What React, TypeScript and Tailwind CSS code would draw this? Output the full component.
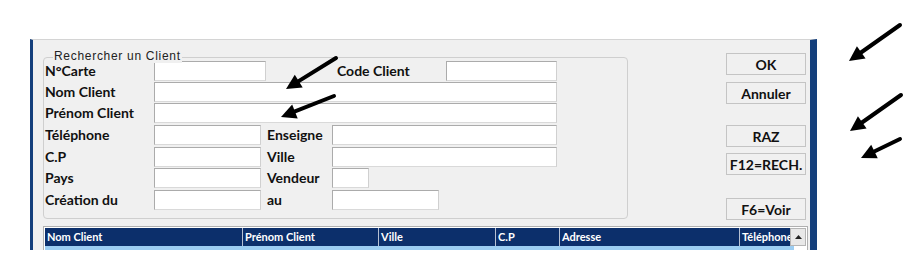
import React from "react";

type Pt = { x1: number; y1: number; x2: number; y2: number };

function Arrow({ x1, y1, x2, y2 }: Pt) {
  const dx = x2 - x1;
  const dy = y2 - y1;
  const L = Math.sqrt(dx * dx + dy * dy);
  const ux = dx / L;
  const uy = dy / L;
  const len = 15;
  const w = 7.5;
  const bx = x2 - ux * len;
  const by = y2 - uy * len;
  const px = -uy;
  const py = ux;
  const pts = `${x2},${y2} ${bx + px * w},${by + py * w} ${bx - px * w},${by - py * w}`;
  return (
    <g>
      <line x1={x1} y1={y1} x2={bx + ux * 2} y2={by + uy * 2} stroke="#000" strokeWidth={4} strokeLinecap="round" />
      <polygon points={pts} fill="#000" />
    </g>
  );
}

const labelFont = { fontFamily: "Lato, 'Open Sans', sans-serif" };

function Field({ w }: { w: number }) {
  return (
    <div
      className="h-[20px] bg-white border border-[#ababab] border-b-[#d9d9d9] border-r-[#d0d0d0] shrink-0"
      style={{ width: w }}
    />
  );
}

function Label({ children, w }: { children: React.ReactNode; w: string }) {
  return (
    <div className={`${w} shrink-0 text-[14px] font-bold text-[#111] leading-none whitespace-nowrap`} style={labelFont}>
      {children}
    </div>
  );
}

function Btn({ children, cls }: { children: React.ReactNode; cls: string }) {
  return (
    <div
      className={`w-[80px] h-[22px] border border-[#c4c4c4] bg-[#f0f0f0] flex items-center justify-center text-[14px] font-bold text-[#111] ${cls}`}
      style={labelFont}
    >
      {children}
    </div>
  );
}

const cols: { t: string; w: string }[] = [
  { t: "Nom Client", w: "w-[197px]" },
  { t: "Prénom Client", w: "w-[136px]" },
  { t: "Ville", w: "w-[117px]" },
  { t: "C.P", w: "w-[64px]" },
  { t: "Adresse", w: "w-[180px]" },
  { t: "Téléphone", w: "w-[51px]" },
];

export default function App() {
  return (
    <div className="relative w-[907px] h-[258px] bg-white overflow-hidden pt-[39px] pl-[30px]">
      <div className="w-[787px] h-[211px] bg-[#f0f0f0] border-l-[3px] border-r-[7px] border-l-[#143f7c] border-r-[#143f7c] border-t border-t-[#d4d4d4] flex flex-col">
        <div className="h-[180px] flex items-start">
          {/* group box */}
          <div className="relative mt-[17px] ml-[10px] w-[585px] h-[162px] border border-[#cfcfcf] rounded-[4px] pl-[1px] pt-[3px]">
            <div
              className="absolute -top-[9px] left-[9px] bg-[#f0f0f0] px-px text-[12px] leading-[14px] text-[#222] tracking-[0.7px]"
              style={{ fontFamily: "'Liberation Sans', Arial, sans-serif" }}
            >
              Rechercher un Client
            </div>
            <div className="flex flex-col">
              <div className="h-[21px] flex items-start">
                <div className="h-[20px] flex items-center"><Label w="w-[109px]">N°Carte</Label></div>
                <Field w={112} />
                <div className="h-[20px] flex items-center ml-[71px]"><Label w="w-[109px]">Code Client</Label></div>
                <Field w={111} />
              </div>
              <div className="h-[21px] flex items-start">
                <div className="h-[20px] flex items-center"><Label w="w-[109px]">Nom Client</Label></div>
                <Field w={403} />
              </div>
              <div className="h-[22px] flex items-start">
                <div className="h-[20px] flex items-center"><Label w="w-[109px]">Prénom Client</Label></div>
                <Field w={403} />
              </div>
              <div className="h-[22px] flex items-start">
                <div className="h-[20px] flex items-center"><Label w="w-[109px]">Téléphone</Label></div>
                <Field w={107} />
                <div className="h-[20px] flex items-center ml-[6px]"><Label w="w-[65px]">Enseigne</Label></div>
                <Field w={225} />
              </div>
              <div className="h-[21px] flex items-start">
                <div className="h-[20px] flex items-center"><Label w="w-[109px]">C.P</Label></div>
                <Field w={107} />
                <div className="h-[20px] flex items-center ml-[6px]"><Label w="w-[65px]">Ville</Label></div>
                <Field w={225} />
              </div>
              <div className="h-[22px] flex items-start">
                <div className="h-[20px] flex items-center"><Label w="w-[109px]">Pays</Label></div>
                <Field w={107} />
                <div className="h-[20px] flex items-center ml-[6px]"><Label w="w-[65px]">Vendeur</Label></div>
                <Field w={37} />
              </div>
              <div className="h-[21px] flex items-start">
                <div className="h-[20px] flex items-center"><Label w="w-[109px]">Création du</Label></div>
                <Field w={107} />
                <div className="h-[20px] flex items-center ml-[6px]"><Label w="w-[65px]">au</Label></div>
                <Field w={107} />
              </div>
            </div>
          </div>
          {/* buttons */}
          <div className="ml-[98px] mt-[13px] flex flex-col">
            <Btn cls="">OK</Btn>
            <Btn cls="mt-[7px]">Annuler</Btn>
            <Btn cls="mt-[21px]">RAZ</Btn>
            <Btn cls="mt-[6px]">F12=RECH.</Btn>
            <Btn cls="mt-[23px]">F6=Voir</Btn>
          </div>
        </div>
        {/* table */}
        <div className="mt-[6px] ml-[10px] w-[765px] flex-1 border border-[#b0b0b0] border-b-0 bg-white p-px pb-0 flex flex-col">
          <div className="flex h-[18px]">
            {cols.map((c, i) => (
              <div
                key={c.t}
                className={`${c.w} shrink-0 h-full bg-[#0c2f6b] text-white text-[11px] font-bold pl-[2px] flex items-center overflow-hidden whitespace-nowrap ${i > 0 ? "border-l border-l-[#b7c1d3]" : ""}`}
                style={labelFont}
              >
                {c.t}
              </div>
            ))}
            <div className="w-[16px] shrink-0 h-full bg-[#e8e8e8] border border-[#b5b5b5] flex items-center justify-center">
              <svg width="7" height="4" viewBox="0 0 7 4"><polygon points="3.5,0 7,4 0,4" fill="#222" /></svg>
            </div>
          </div>
          <div className="flex flex-1">
            <div className="w-[749px] bg-[#9ccdf2]" />
            <div className="flex-1 bg-white" />
          </div>
        </div>
      </div>

      <svg className="absolute inset-0 pointer-events-none" width="907" height="258">
        <Arrow x1={336} y1={58} x2={286} y2={89} />
        <Arrow x1={334} y1={96} x2={281} y2={117} />
        <Arrow x1={900} y1={25} x2={849} y2={61} />
        <Arrow x1={901} y1={95} x2={850} y2={131} />
        <Arrow x1={900} y1={139} x2={861} y2={158} />
      </svg>
    </div>
  );
}
